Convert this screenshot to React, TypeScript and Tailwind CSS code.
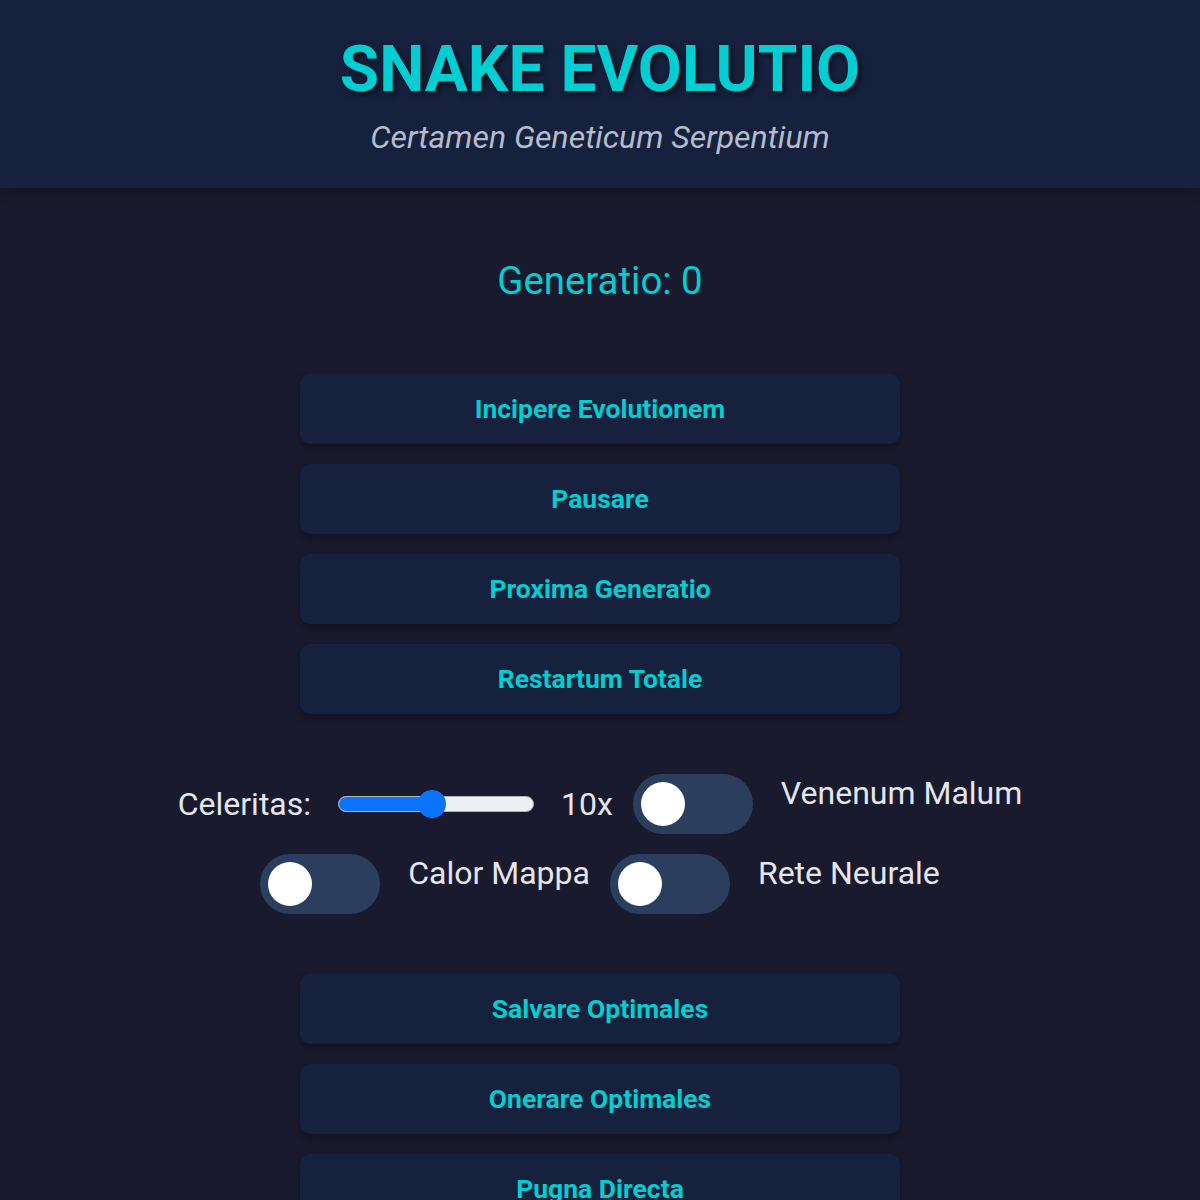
import { useState } from 'react'

const topActions = ['Incipere Evolutionem', 'Pausare', 'Proxima Generatio', 'Restartum Totale']
const bottomActions = ['Salvare Optimales', 'Onerare Optimales', 'Pugna Directa']

function ActionButton({ label }: { label: string }) {
  return (
    <button className="w-[600px] h-[70px] shrink-0 rounded-[10px] bg-[#16213e] text-[#00ced1] text-[26.5px] leading-[32px] font-bold shadow-[0_4px_10px_rgba(0,0,0,0.35)]">
      {label}
    </button>
  )
}

function Toggle({ label, on, onChange }: { label: string; on: boolean; onChange: () => void }) {
  return (
    <label className="flex items-start gap-7 cursor-pointer">
      <span
        onClick={onChange}
        className={`flex items-center w-[120px] h-[60px] rounded-full bg-[#2c3e5e] px-2 ${on ? 'justify-end' : 'justify-start'}`}
      >
        <span className="block w-[44px] h-[44px] rounded-full bg-white" />
      </span>
      <span className="text-[32px] leading-[38px] text-[#e4e6ec]">{label}</span>
    </label>
  )
}

// range 1..20, thumb travels inside the track like a native input
function SpeedSlider({ value }: { value: number }) {
  const ratio = (value - 1) / 19
  const center = 14 + ratio * (196 - 28)
  return (
    <div className="relative w-[196px] h-[28px] mx-[7px] flex items-center">
      <div className="w-full h-[16px] rounded-full bg-[#efefef] border border-[#b5b5b5] overflow-hidden">
        <div className="h-full bg-[#0b74ff]" style={{ width: center }} />
      </div>
      <div
        className="absolute top-0 w-[28px] h-[28px] rounded-full bg-[#0b74ff] -translate-x-1/2"
        style={{ left: center }}
      />
    </div>
  )
}

export default function App() {
  const [venenum, setVenenum] = useState(false)
  const [calor, setCalor] = useState(false)
  const [rete, setRete] = useState(false)

  return (
    <div className="min-h-screen bg-[#1a1a2e] font-['Roboto',sans-serif]">
      {/* Header */}
      <header className="h-[188px] bg-[#16213e] flex flex-col items-center shadow-[0_4px_12px_rgba(0,0,0,0.3)]">
        <h1 className="mt-[32px] text-[64px] leading-[76px] font-bold text-[#00ced1] [text-shadow:3px_3px_6px_rgba(0,0,0,0.55)]">
          SNAKE EVOLUTIO
        </h1>
        <p className="mt-[10px] text-[32px] leading-[38px] italic text-[#b4bccb]">Certamen Geneticum Serpentium</p>
      </header>

      <main className="flex flex-col items-center pt-[70px]">
        <div className="text-[38.4px] leading-[46px] text-[#00ced1] mb-[70px]">Generatio: 0</div>

        <div className="flex flex-col items-center gap-5">
          {topActions.map((a) => (
            <ActionButton key={a} label={a} />
          ))}

          {/* Controls */}
          <div className="w-[900px] my-10 flex flex-wrap items-center justify-center gap-x-5 gap-y-5">
            <span className="text-[32px] leading-[38px] text-[#e4e6ec]">Celeritas:</span>
            <SpeedSlider value={10} />
            <span className="text-[32px] leading-[38px] text-[#e4e6ec]">10x</span>
            <Toggle label="Venenum Malum" on={venenum} onChange={() => setVenenum(!venenum)} />
            <Toggle label="Calor Mappa" on={calor} onChange={() => setCalor(!calor)} />
            <Toggle label="Rete Neurale" on={rete} onChange={() => setRete(!rete)} />
          </div>

          {bottomActions.map((a) => (
            <ActionButton key={a} label={a} />
          ))}
        </div>
      </main>
    </div>
  )
}
